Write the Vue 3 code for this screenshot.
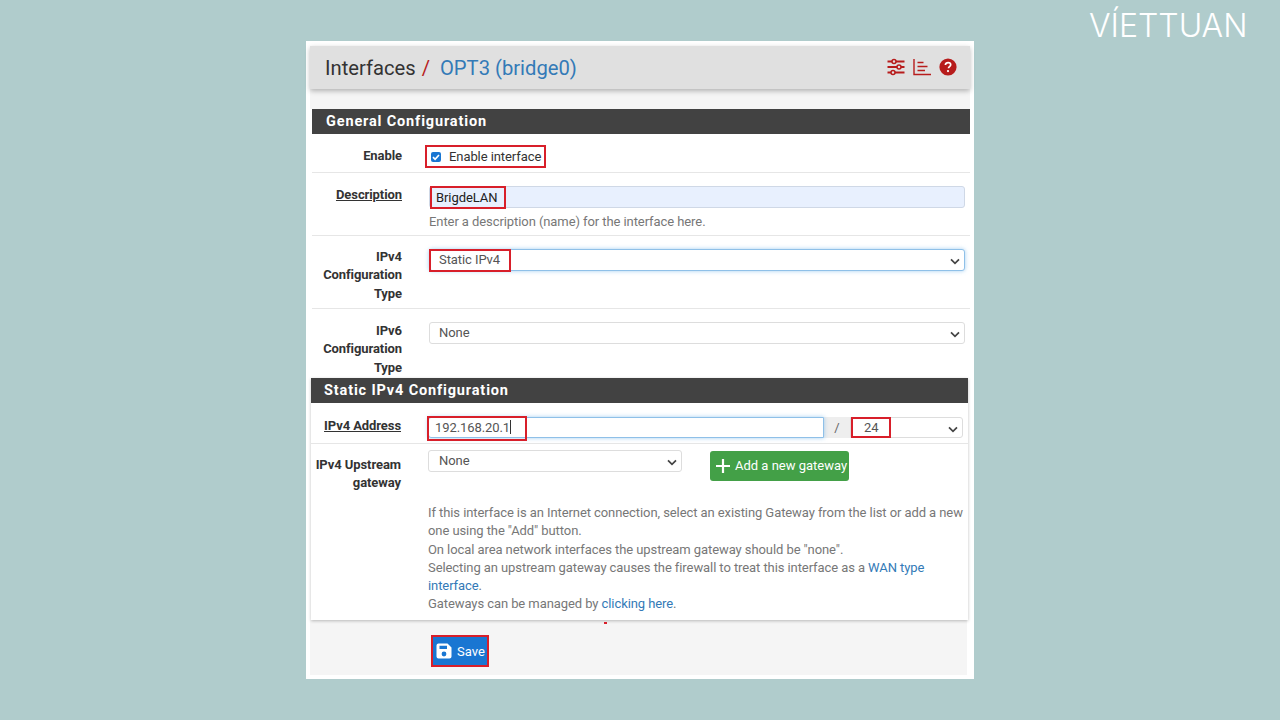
<script setup>
const helpLines = [
  'If this interface is an Internet connection, select an existing Gateway from the list or add a new one using the "Add" button.',
  'On local area network interfaces the upstream gateway should be "none".',
]
</script>

<template>
  <main class="stage">
    <div class="logo">VÍETTUAN</div>
    <div class="card">
      <header class="crumb">
        <h1><span>Interfaces</span><i>/</i><a>OPT3 (bridge0)</a></h1>
        <div class="tools">
          <svg width="18" height="18" viewBox="0 0 18 18" fill="none" stroke="#b71c1c" stroke-width="1.9">
            <path d="M0.5 3.5h17M0.5 9h17M0.5 14.5h17" />
            <circle cx="7" cy="3.5" r="2" fill="#e0e0e0" stroke-width="1.5" />
            <circle cx="12" cy="9" r="2" fill="#e0e0e0" stroke-width="1.5" />
            <circle cx="6" cy="14.5" r="2" fill="#e0e0e0" stroke-width="1.5" />
          </svg>
          <svg width="18" height="18" viewBox="0 0 18 18" fill="none" stroke="#b71c1c" stroke-width="1.4">
            <path d="M1 1v15.5h17M4.5 4.5h6M4.5 8.500h10M4.500 12.500h7.500" />
          </svg>
          <svg width="18" height="18" viewBox="0 0 18 18">
            <circle cx="9" cy="9" r="8.600" fill="#b71c1c" />
            <path d="M6.400 7.100c0-1.600 1.200-2.500 2.700-2.500s2.600.9 2.600 2.200c0 1.900-2.200 1.800-2.200 3.400" fill="none" stroke="#fff" stroke-width="1.700" />
            <circle cx="9" cy="13.100" r="1.100" fill="#fff" />
          </svg>
        </div>
      </header>
      <div class="spacer"></div>

      <section class="panel first">
        <h2>General Configuration</h2>
        <div class="row r-enable">
          <label>Enable</label>
          <div class="ctl">
            <div class="check">
              <span class="box"><svg width="10" height="10" viewBox="0 0 10 10"><path d="M2 5.200l2.100 2.100L8 3" fill="none" stroke="#fff" stroke-width="1.700" /></svg></span>
              Enable interface
              <b class="mark m-enable"></b>
            </div>
          </div>
        </div>
        <div class="row r-desc">
          <label class="u">Description</label>
          <div class="ctl">
            <div class="field autofill">BrigdeLAN<b class="mark m-desc"></b></div>
            <p class="help">Enter a description (name) for the interface here.</p>
          </div>
        </div>
        <div class="row r-type">
          <label>IPv4 Configuration Type</label>
          <div class="ctl">
            <div class="field select focus">Static IPv4
              <svg class="chev" width="10" height="7" viewBox="0 0 10 7"><path d="M1 1.300l4 4 4-4" fill="none" stroke="#444" stroke-width="1.700" /></svg>
              <b class="mark m-static"></b>
            </div>
          </div>
        </div>
        <div class="row r-type6">
          <label>IPv6 Configuration Type</label>
          <div class="ctl up">
            <div class="field select">None
              <svg class="chev" width="10" height="7" viewBox="0 0 10 7"><path d="M1 1.300l4 4 4-4" fill="none" stroke="#444" stroke-width="1.700" /></svg>
            </div>
          </div>
        </div>
      </section>

      <section class="panel second">
        <h2>Static IPv4 Configuration</h2>
        <div class="row r-addr">
          <label class="u">IPv4 Address</label>
          <div class="ctl group">
            <div class="field addr focus">192.168.20.1<span class="caret"></span><b class="mark m-addr"></b></div>
            <span class="addon">/</span>
            <div class="field mask">24
              <svg class="chev" width="10" height="7" viewBox="0 0 10 7"><path d="M1 1.300l4 4 4-4" fill="none" stroke="#444" stroke-width="1.700" /></svg>
              <b class="mark m-mask"></b>
            </div>
          </div>
        </div>
        <div class="row r-gw">
          <label>IPv4 Upstream gateway</label>
          <div class="ctl">
            <div class="gw-top">
              <div class="field gw">None
                <svg class="chev" width="10" height="7" viewBox="0 0 10 7"><path d="M1 1.300l4 4 4-4" fill="none" stroke="#444" stroke-width="1.700" /></svg>
              </div>
              <button class="add">
                <svg width="16" height="16" viewBox="0 0 16 16"><path d="M8 1v14M1 8h14" stroke="#fff" stroke-width="2.200" /></svg>
                Add a new gateway
              </button>
            </div>
            <div class="help long">
              <div v-for="line in helpLines" :key="line">{{ line }}</div>
              <div>Selecting an upstream gateway causes the firewall to treat this interface as a <a>WAN type interface</a>.</div>
              <div>Gateways can be managed by <a>clicking here</a>.</div>
            </div>
          </div>
        </div>
      </section>

      <footer class="foot">
        <b class="dot"></b>
        <button class="save">
          <svg width="16" height="16" viewBox="0 0 16 16">
            <path fill-rule="evenodd" fill="#fff" d="M2.500 0.500h9l4 4v9a2 2 0 0 1-2 2h-11a2 2 0 0 1-2-2v-11a2 2 0 0 1 2-2zM3.500 2.700v3.200h7.500V2.700zM8 8.600a2.400 2.400 0 1 0 0 4.800 2.400 2.400 0 0 0 0-4.800z" />
          </svg>
          Save
        </button>
      </footer>
    </div>
  </main>
</template>

<style>
html, body { margin: 0; }
</style>

<style scoped>
.stage {
  position: relative;
  width: 1280px;
  height: 720px;
  background: #b0cccc;
  overflow: hidden;
  font-family: Roboto, "Liberation Sans", sans-serif;
  font-size: 13px;
  letter-spacing: -.08px;
  color: #212121;
  padding-top: 41px;
  box-sizing: border-box;
}
.logo {
  position: absolute;
  left: 1089px;
  top: 3px;
  color: #fff;
  font-family: Inter, sans-serif;
  font-weight: 300;
  font-size: 32px;
  line-height: 46px;
  letter-spacing: 0;
  white-space: nowrap;
}
.card {
  width: 668px;
  height: 638px;
  margin-left: 306px;
  box-sizing: border-box;
  background: #fff;
  padding: 5px 4px 4px;
  display: flex;
  flex-direction: column;
}
.crumb {
  height: 43px;
  flex: none;
  background: #e0e0e0;
  box-shadow: 0 2px 5px rgba(0, 0, 0, .28);
  display: flex;
  align-items: center;
  justify-content: space-between;
  padding: 0 13px 0 15px;
  position: relative;
  z-index: 1;
}
h1 { margin: 0; font-size: 20.2px; font-weight: 400; color: #333; display: flex; letter-spacing: 0; padding-top: 1px; }
h1 i { color: #b71c1c; font-style: normal; margin: 0 10px 0 6px; }
h1 a, .help a { color: #337ab7; }
.tools { display: flex; gap: 8px; align-items: center; margin-bottom: 2px; }
.spacer { height: 20px; flex: none; background: #f5f5f5; }
.panel { background: #fff; flex: none; }
.first { margin: 0 0 0 2px; width: 658px; }
.second { margin: 0 0 0 1px; width: 657px; box-shadow: 0 1px 3px rgba(0, 0, 0, .25); position: relative; z-index: 1; }
h2 {
  margin: 0;
  height: 25px;
  line-height: 25px;
  background: #424242;
  color: #fff;
  font-size: 14.5px;
  font-weight: 700;
  letter-spacing: .85px;
  padding-left: 14px;
}
.second h2 { padding-left: 13px; }
.row {
  display: flex;
  box-sizing: border-box;
  border-bottom: 1px solid #e6e6e6;
  line-height: 18.3px;
}
.row:last-child { border-bottom: 0; }
.row label {
  width: 90px;
  flex: none;
  margin-right: 27px;
  text-align: right;
  font-weight: 700;
  color: #333;
}
.row label.u { text-decoration: underline; }
.ctl { flex: none; width: 536px; }
.r-enable { height: 39px; padding-top: 14px; }
.r-enable label { margin-top: -1px; }
.r-desc { height: 63px; padding-top: 13px; }
.r-type { height: 73px; padding-top: 13px; }
.r-type label { margin-top: -1px; }
.r-type6 { height: 69px; padding-top: 13px; border-bottom: 0; }
.up { margin-top: 0; }
.r-addr { height: 41px; padding-top: 15px; }
.r-gw { height: 176px; padding-top: 6px; }
.r-gw label { padding-top: 6px; }
.check { position: relative; display: flex; align-items: center; gap: 8px; height: 18px; color: #333; margin-left: 2px; }
.box {
  width: 10px; height: 10px; border-radius: 2px; background: #1976d2;
  display: flex; align-items: center; justify-content: center;
}
.field {
  position: relative;
  height: 22px;
  box-sizing: border-box;
  border: 1px solid #ddd;
  border-radius: 3px;
  background: #fff;
  color: #555;
  line-height: 19px;
  padding-left: 9px;
}
.autofill { background: #e8f0fe; border-color: #cfd8e6; color: #212121; padding-left: 6px; line-height: 21px; }
.focus { border-color: #8fc0e8; box-shadow: 0 0 4px rgba(102, 175, 233, .6); }
.chev { position: absolute; right: 4px; top: 8px; }
.help { margin: 5px 0 0; color: #777; }
.mark { position: absolute; border: 2px solid #d81f2a; box-sizing: border-box; }
.m-enable { left: -6px; top: -3px; width: 121px; height: 23px; }
.m-desc { left: 0; top: -1px; width: 76px; height: 23px; }
.m-static { left: -1px; top: -1px; width: 82px; height: 23px; }
.m-addr { left: -2px; top: -2px; width: 100px; height: 25px; }
.m-mask { left: 0; top: -1px; width: 40px; height: 21px; }
.group { display: flex; margin-top: -1px; }
.r-addr label { margin-top: -1px; }
.addr { width: 396px; height: 21px; border-radius: 3px 0 0 3px; padding-left: 6px; line-height: 19px; }
.caret { display: inline-block; width: 1px; height: 14px; background: #333; vertical-align: -2px; }
.addon { width: 26px; height: 21px; background: #eee; color: #666; text-align: center; line-height: 21px; flex: none; }
.mask { width: 113px; height: 21px; padding-left: 13px; line-height: 20px; border-radius: 0 3px 3px 0; }
.gw-top { display: flex; align-items: flex-start; }
.gw { width: 254px; height: 22px; padding-left: 10px; line-height: 20px; }
.add {
  margin: 1px 0 0 28px;
  width: 139px;
  height: 30px;
  border: 0;
  border-radius: 3px;
  background: #43a047;
  color: #fff;
  font: inherit;
  white-space: nowrap;
  padding: 0 0 0 5px;
  display: flex;
  align-items: center;
  gap: 4px;
}
.long { margin-top: 23px; }
.foot {
  flex: 1;
  background: #f5f5f5;
  position: relative;
  padding: 15px 0 0 121px;
  margin-right: 3px;
}
.dot { position: absolute; left: 294px; top: 2px; width: 3px; height: 2px; background: #d81f2a; z-index: 2; }
.save {
  box-sizing: border-box;
  width: 58px;
  height: 32px;
  border: 2px solid #d81f2a;
  background: #1976d2;
  color: #fff;
  font: inherit;
  padding: 0 0 0 3px;
  display: flex;
  align-items: center;
  gap: 5px;
}
</style>
